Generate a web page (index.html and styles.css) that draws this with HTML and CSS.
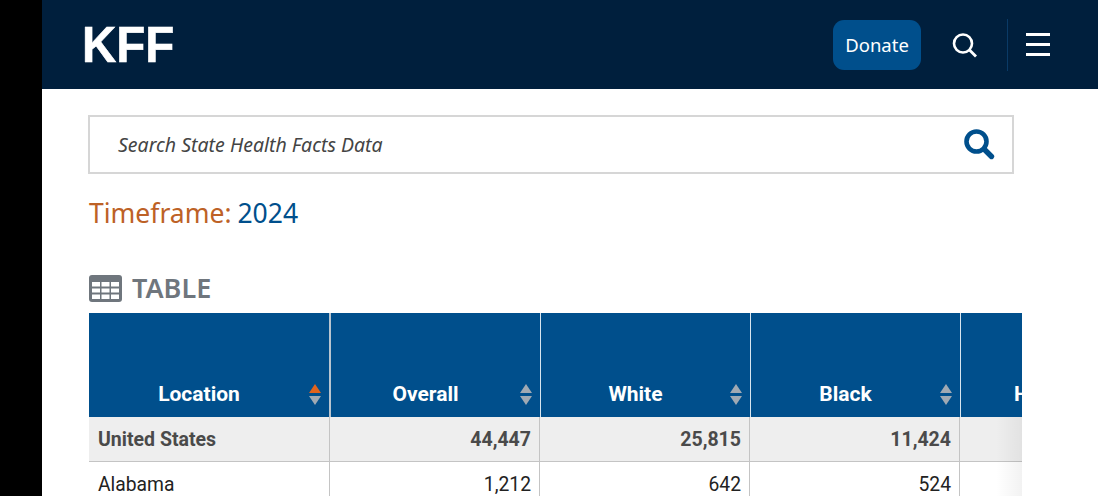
FILE: index.html
```html
<!DOCTYPE html>
<html lang="en">
<head>
  <meta charset="UTF-8" />
  <title>State Health Facts</title>
  <link rel="stylesheet" href="styles.css">
</head>
<body>
  <div class="page">
    <header class="topbar">
      <div class="logo">KFF</div>
      <div class="topbar-right">
        <a class="donate">Donate</a>
        <svg class="top-search" width="26" height="26" viewBox="0 0 26 26" fill="none" stroke="#fff">
          <circle cx="12" cy="11.5" r="9" stroke-width="2.6"/>
          <path d="M18.5 18 L25 24.5" stroke-width="2.8"/>
        </svg>
        <div class="divider"></div>
        <div class="burger"><span></span><span></span><span></span></div>
      </div>
    </header>

    <main class="content">
      <div class="searchbox">
        <span class="placeholder">Search State Health Facts Data</span>
        <svg width="32" height="32" viewBox="0 0 32 32" fill="none" stroke="#004f8c" stroke-linecap="round">
          <circle cx="12.5" cy="12.5" r="10" stroke-width="4.6"/>
          <path d="M21 21 L27.5 27.5" stroke-width="5.4"/>
        </svg>
      </div>

      <div class="timeframe"><span class="tf-label">Timeframe:</span> <span class="tf-year">2024</span></div>

      <div class="table-title">
        <svg width="33" height="27" viewBox="0 0 33 27">
          <rect x="0" y="0" width="33" height="27" rx="3" fill="#6f767d"/>
          <g fill="#fff">
            <rect x="3" y="7" width="8" height="4.5"/><rect x="12.5" y="7" width="8" height="4.5"/><rect x="22" y="7" width="8" height="4.5"/>
            <rect x="3" y="13.5" width="8" height="4"/><rect x="12.5" y="13.5" width="8" height="4"/><rect x="22" y="13.5" width="8" height="4"/>
            <rect x="3" y="19.5" width="8" height="4.5"/><rect x="12.5" y="19.5" width="8" height="4.5"/><rect x="22" y="19.5" width="8" height="4.5"/>
          </g>
        </svg>
        <span>TABLE</span>
      </div>

      <div class="table-wrap">
        <div class="row head">
          <div class="cell loc">Location<i class="sort asc"></i></div>
          <div class="cell">Overall<i class="sort"></i></div>
          <div class="cell">White<i class="sort"></i></div>
          <div class="cell">Black<i class="sort"></i></div>
          <div class="cell last">Hispanic</div>
        </div>
        <div class="row total">
          <div class="cell loc">United States</div>
          <div class="cell">44,447</div>
          <div class="cell">25,815</div>
          <div class="cell">11,424</div>
          <div class="cell last"></div>
        </div>
        <div class="row">
          <div class="cell loc">Alabama</div>
          <div class="cell">1,212</div>
          <div class="cell">642</div>
          <div class="cell">524</div>
          <div class="cell last"></div>
        </div>
        <div class="fade"></div>
      </div>
    </main>
  </div>
</body>
</html>
```

FILE: styles.css
```css
html, body {
  margin: 0;
  height: 100%;
  background: #000;
  overflow: hidden;
}

.page {
  margin-left: 42px;
  height: 496px;
  background: #fff;
  overflow: hidden;
}

/* top bar */
.topbar {
  height: 89px;
  background: #001f3d;
  display: flex;
  justify-content: space-between;
  align-items: center;
  padding: 0 48px 0 39.5px;
}

.logo {
  font-family: "Liberation Sans", sans-serif;
  font-weight: 700;
  font-size: 50px;
  line-height: 50px;
  -webkit-text-stroke: 0.6px #fff;
  color: #fff;
  transform: scaleX(0.95);
  transform-origin: left center;
}

.topbar-right {
  display: flex;
  align-items: center;
}

.donate {
  width: 88px;
  height: 50px;
  border-radius: 11px;
  background: #004f8c;
  color: #fff;
  font-family: "Noto Sans", sans-serif;
  font-size: 18.5px;
  display: flex;
  align-items: center;
  justify-content: center;
}

.top-search {
  margin-left: 30px;
}

.divider {
  width: 1px;
  height: 52px;
  background: #0a3a66;
  margin-left: 30px;
}

.burger {
  margin-left: 18px;
  width: 24px;
  display: flex;
  flex-direction: column;
  gap: 7px;
}

.burger span {
  height: 3px;
  background: #fff;
}

/* content */
.content {
  padding: 26px 0 0 46px;
}

.searchbox {
  width: 878px;
  height: 55px;
  border: 2px solid #d6d6d6;
  display: flex;
  align-items: center;
  justify-content: space-between;
  padding: 0 16px 0 28px;
}

.placeholder {
  font-family: "Noto Sans", sans-serif;
  font-style: italic;
  font-size: 19.5px;
  color: #444;
}

.timeframe {
  margin-top: 20px;
  margin-left: 1px;
  font-family: "Noto Sans", sans-serif;
  font-size: 26.5px;
  line-height: 38px;
  word-spacing: -1px;
}

.tf-label { color: #bd6126; }
.tf-year { color: #004f8c; }

.table-title {
  margin-top: 43px;
  margin-left: 1px;
  height: 27px;
  display: flex;
  align-items: center;
  gap: 10px;
  font-family: "Noto Sans", sans-serif;
  font-size: 27px;
  font-weight: 600;
  color: #6f767d;
}

.table-title span {
  margin-bottom: 2px;
}

/* table */
.table-wrap {
  position: relative;
  margin-top: 11px;
  margin-left: 1px;
  width: 933px;
  overflow: hidden;
  font-family: Roboto, sans-serif;
}

.row {
  display: grid;
  grid-template-columns: 241px 210px 210px 210px 62px;
  height: 45px;
  background: #fff;
  font-size: 19.3px;
  color: #222;
}

.cell {
  display: flex;
  align-items: center;
  justify-content: flex-end;
  padding: 0 8px 0 9px;
  border-right: 1px solid #c4c4c4;
  position: relative;
  box-sizing: border-box;
  white-space: nowrap;
}

.cell.loc {
  justify-content: flex-start;
}

.cell.last {
  border-right: 0;
}

.row.head {
  grid-template-columns: 242px 210px 210px 210px 61px;
  height: 104px;
  background: #004f8c;
  color: #fff;
  font-weight: 700;
  font-size: 21px;
}

.head .cell {
  align-items: flex-end;
  justify-content: center;
  padding: 0 20px 11px 0;
  border-right: 1px solid #d7e5ef;
}

.head .cell.loc {
  border-right: 2px solid #b9c5cf;
}

.head .cell.last {
  border-right: 0;
  justify-content: flex-start;
  padding-left: 53px;
}

.row.total {
  height: 44px;
  background: #eeeeee;
  border-bottom: 1px solid #c4c4c4;
  font-weight: 700;
  font-size: 19.5px;
  color: #4a4a4a;
}

/* sort arrows */
.sort {
  position: absolute;
  right: 7px;
  bottom: 12px;
  width: 13px;
  height: 21px;
}

.sort::before,
.sort::after {
  content: "";
  position: absolute;
  left: 0;
  border-left: 6.5px solid transparent;
  border-right: 6.5px solid transparent;
}

.sort::before {
  top: 0;
  border-bottom: 9px solid #9fa9b3;
}

.sort::after {
  bottom: 0;
  border-top: 9px solid #9fa9b3;
}

.sort.asc::before {
  border-bottom-color: #e0641e;
}

/* scroll shadow */
.fade {
  position: absolute;
  top: 104px;
  right: 0;
  bottom: 0;
  width: 26px;
  background: linear-gradient(to right, rgba(0, 0, 0, 0), rgba(0, 0, 0, 0.05));
}
```
